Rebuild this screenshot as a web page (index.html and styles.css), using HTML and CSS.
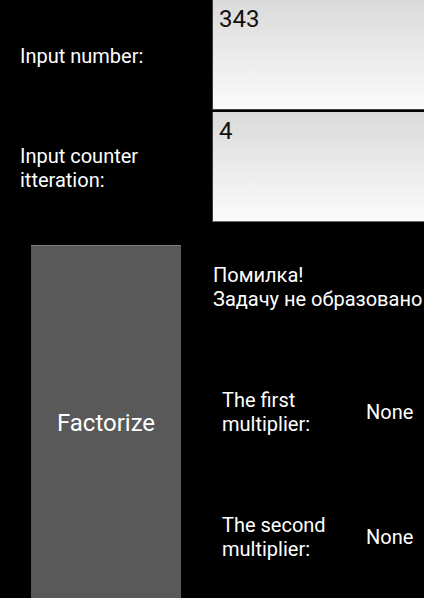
FILE: index.html
```html
<!DOCTYPE html>
<html>
<head>
<meta charset="utf-8">
<link rel="stylesheet" href="styles.css">
</head>
<body>
<div class="app">
  <div class="top-row">
    <div class="label-cell"><span class="label">Input number:</span></div>
    <div class="input-box"><span class="input-text">343</span></div>
  </div>
  <div class="top-row">
    <div class="label-cell"><span class="label">Input counter<br>itteration:</span></div>
    <div class="input-box"><span class="input-text">4</span></div>
  </div>
  <div class="bottom">
    <div class="btn-col">
      <div class="button">Factorize</div>
    </div>
    <div class="result-col">
      <div class="result-row error">Помилка!<br>Задачу не образовано</div>
      <div class="result-row mult">
        <div class="mult-label">The first<br>multiplier:</div>
        <div class="mult-value">None</div>
      </div>
      <div class="result-row mult">
        <div class="mult-label">The second<br>multiplier:</div>
        <div class="mult-value">None</div>
      </div>
    </div>
  </div>
</div>
</body>
</html>
```

FILE: styles.css
```css
html, body {
  margin: 0;
  padding: 0;
  background: #000;
  width: 424px;
  height: 598px;
  overflow: hidden;
}
body {
  font-family: Roboto, "Liberation Sans", sans-serif;
  color: #fff;
  font-size: 20px;
  line-height: 24px;
}
.app {
  display: flex;
  flex-direction: column;
}
.top-row {
  display: flex;
  height: 112px;
}
.label-cell {
  width: 212px;
  display: flex;
  align-items: center;
  padding-left: 20px;
  box-sizing: border-box;
}
.input-box {
  flex: 1;
  height: 110px;
  box-sizing: border-box;
  background: linear-gradient(#dadada, #fbfbfb);
  border-left: 1px solid #3a3a3a;
  border-bottom: 1px solid #404040;
  padding: 5px 6px;
  color: #111;
  font-size: 24px;
  line-height: 28px;
}
.top-row + .top-row .input-box {
  border-bottom: 1px solid #6a6a6a;
}
.bottom {
  display: flex;
  height: 375px;
}
.btn-col {
  width: 212px;
  padding-top: 21px;
  padding-left: 31px;
  box-sizing: border-box;
}
.button {
  width: 150px;
  height: 360px;
  background: #595959;
  border-top: 1px solid #7c7c7c;
  box-sizing: border-box;
  display: flex;
  align-items: center;
  justify-content: center;
  font-size: 24px;
  padding-bottom: 6px;
}
.result-col {
  flex: 1;
  display: flex;
  flex-direction: column;
}
.result-row {
  height: 125px;
  display: flex;
  align-items: center;
}
.error {
  padding-left: 1px;
  white-space: nowrap;
}
.mult-label {
  width: 154px;
  padding-left: 10px;
  box-sizing: border-box;
}
.mult-value {
  flex: 1;
}
```
